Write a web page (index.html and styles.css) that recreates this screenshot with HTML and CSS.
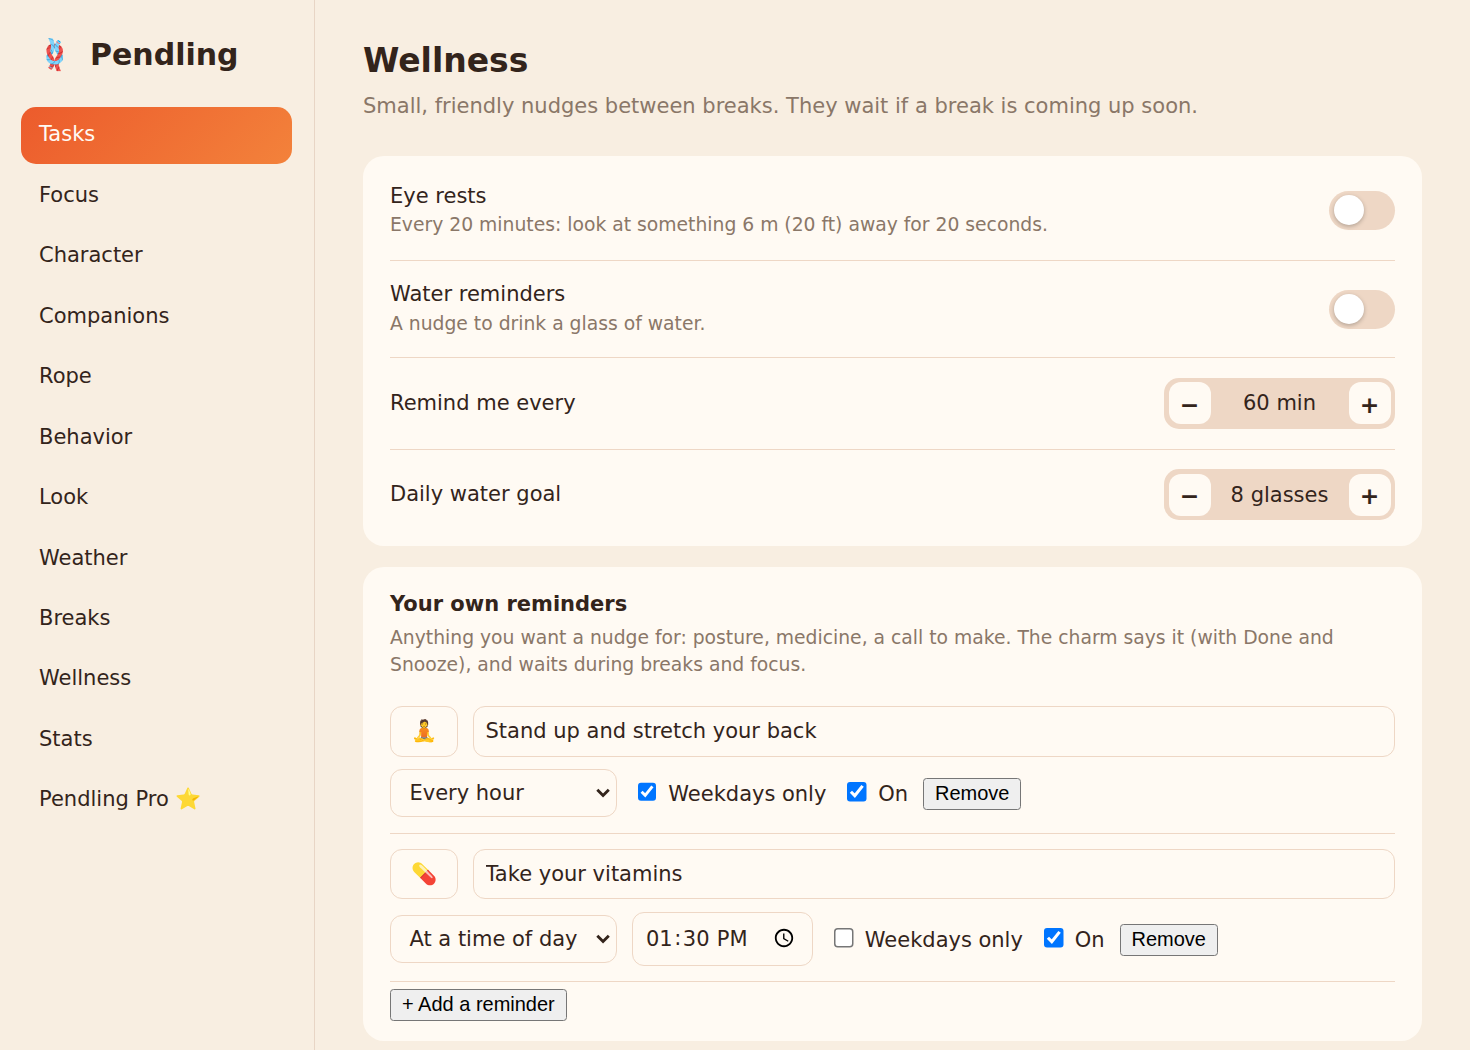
FILE: index.html
```
<!DOCTYPE html>
<html lang="en">
<head>
<meta charset="utf-8">
<title>Pendling</title>
<link rel="stylesheet" href="styles.css">
</head>
<body>
<aside class="sidebar">
  <div class="brand"><span class="brand-icon">🪢</span><span>Pendling</span></div>
  <nav class="nav">
    <a class="active">Tasks</a>
    <a>Focus</a>
    <a>Character</a>
    <a>Companions</a>
    <a>Rope</a>
    <a>Behavior</a>
    <a>Look</a>
    <a>Weather</a>
    <a>Breaks</a>
    <a>Wellness</a>
    <a>Stats</a>
    <a>Pendling Pro ⭐</a>
  </nav>
</aside>
<main class="main">
  <h1>Wellness</h1>
  <p class="lead">Small, friendly nudges between breaks. They wait if a break is coming up soon.</p>

  <section class="card settings">
    <div class="row row-eye">
      <div><div class="label">Eye rests</div><div class="hint">Every 20 minutes: look at something 6 m (20 ft) away for 20 seconds.</div></div>
      <div class="toggle"><span class="knob"></span></div>
    </div>
    <div class="row row-water">
      <div><div class="label">Water reminders</div><div class="hint">A nudge to drink a glass of water.</div></div>
      <div class="toggle"><span class="knob"></span></div>
    </div>
    <div class="row row-every">
      <div class="label">Remind me every</div>
      <div class="stepper"><button>−</button><span>60 min</span><button>+</button></div>
    </div>
    <div class="row row-goal">
      <div class="label">Daily water goal</div>
      <div class="stepper"><button>−</button><span>8 glasses</span><button>+</button></div>
    </div>
  </section>

  <section class="card own">
    <h2>Your own reminders</h2>
    <p class="hint">Anything you want a nudge for: posture, medicine, a call to make. The charm says it (with Done and Snooze), and waits during breaks and focus.</p>
    <div class="reminder first">
      <div class="line"><input class="field emoji" value="🧘"><input class="field text" value="Stand up and stretch your back"></div>
      <div class="line options">
        <div class="picker">
          <select class="field"><option>Every hour</option><option>At a time of day</option></select>
          <svg class="chevron" viewBox="0 0 14 10"><path d="M1.2 1.8 7 7.6l5.8-5.8"/></svg>
        </div>
        <label class="check"><input type="checkbox" checked> Weekdays only</label>
        <label class="check"><input type="checkbox" checked> On</label>
        <button class="plain">Remove</button>
      </div>
    </div>
    <div class="reminder second">
      <div class="line"><input class="field emoji" value="💊"><input class="field text" value="Take your vitamins"></div>
      <div class="line options">
        <div class="picker">
          <select class="field"><option>At a time of day</option><option>Every hour</option></select>
          <svg class="chevron" viewBox="0 0 14 10"><path d="M1.2 1.8 7 7.6l5.8-5.8"/></svg>
        </div>
        <input class="field time" type="time" value="13:30">
        <label class="check"><input type="checkbox"> Weekdays only</label>
        <label class="check"><input type="checkbox" checked> On</label>
        <button class="plain">Remove</button>
      </div>
    </div>
    <button class="plain add">+ Add a reminder</button>
  </section>
</main>
</body>
</html>
```
FILE: styles.css
```
* { box-sizing: border-box; }
html { zoom: 1.5; }
body {
  margin: 0;
  width: 980px;
  height: 700px;
  overflow: hidden;
  display: flex;
  background: #f8eee1;
  color: #33241b;
  font: 14px "DejaVu Sans", sans-serif;
}
.sidebar {
  width: 210px;
  flex: none;
  padding: 20px 14px;
  border-right: 1px solid #e8d5c5;
}
.brand {
  display: flex;
  align-items: center;
  gap: 10px;
  height: 33px;
  padding: 0 12px 0 10px;
  margin-bottom: 18px;
  font-size: 20px;
  font-weight: 700;
}
.brand-icon { width: 26px; }
.nav { display: flex; flex-direction: column; gap: 2px; }
.nav a {
  height: 38.3px;
  line-height: 37.8px;
  padding: 0 12px;
  border-radius: 10px;
}
.nav .active {
  line-height: 36.6px;
  margin-right: .4px;
  color: #fffaf3;
  background: linear-gradient(135deg, #ec5b2c, #f3823b);
}
.main { flex: 1; padding: 26.6px 32px 0; }
h1 { margin: 0; font-size: 22px; line-height: 28px; }
.lead { margin: 6.4px 0 0; line-height: 20px; color: #8a7768; height: 43px; }
.card {
  background: #fffaf3;
  border-radius: 14px;
  margin-bottom: 14px;
}
.settings { height: 260px; padding: 4px 18px; }
.row {
  display: flex;
  align-items: center;
  justify-content: space-between;
  border-bottom: 1px solid #eed7c5;
}
.row-eye { height: 66px; }
.row-eye .label { margin-top: -1px; }
.row-eye .toggle { margin-bottom: 1px; }
.row-water { height: 64.7px; }
.row-every { height: 61.2px; }
.row-goal { height: 60.2px; border-bottom: 0; }
.row-goal .label { margin-bottom: .8px; }
.label { line-height: 18px; }
.hint { font-size: 12.5px; line-height: 18px; color: #8a7768; }
.row .hint { margin-top: .8px; }
.toggle {
  width: 44px;
  height: 26px;
  border-radius: 13px;
  padding: 3px;
  background: #eed7c5;
}
.knob {
  display: block;
  width: 20px;
  height: 20px;
  border-radius: 50%;
  background: #fff;
  box-shadow: 0 1px 3px rgba(0, 0, 0, .25);
}
.stepper {
  display: flex;
  width: 154px;
  height: 34px;
  padding: 3px;
  border-radius: 10px;
  background: #eed7c5;
}
.stepper button {
  width: 28px;
  height: 28px;
  padding: 2px 0 0;
  border: 0;
  border-radius: 8px;
  background: #fffaf3;
  color: #33241b;
  font: 700 15.6px "DejaVu Sans", sans-serif;
}
.stepper span { flex: 1; text-align: center; line-height: 28px; }
.own { height: 316px; padding: 17px 18px 0; }
h2 { margin: 0; font-size: 14px; line-height: 17px; }
.own .hint { margin: 4px 0 0; height: 37px; }
.line { display: flex; gap: 10px; }
.reminder { border-bottom: 1px solid #eed7c5; }
.first { padding-top: 18px; height: 102.7px; }
.second { padding-top: 10.3px; height: 98.9px; }
.field {
  margin: 0;
  border: 1px solid #eed7c5;
  border-radius: 8px;
  padding: 0 8px;
  background: #fffaf3;
  color: #33241b;
  font: 14px "DejaVu Sans", sans-serif;
  height: 33.6px;
}
.emoji, .text { padding-bottom: .8px; }
.emoji { width: 45px; text-align: center; }
.text { flex: 1; }
.options { align-items: center; margin-top: 8.2px; }
.second .options { margin-top: 8.5px; }
.picker { display: grid; align-items: center; }
.picker > * { grid-area: 1 / 1; }
.picker select { appearance: none; width: 151px; height: 32px; padding: 0 12.3px; }
.chevron {
  width: 9.4px;
  height: 6.6px;
  justify-self: end;
  margin-right: 4px;
  pointer-events: none;
  fill: none;
  stroke: #33241b;
  stroke-width: 2.9;
}
.options .time { width: 121px; height: 36px; padding-bottom: 1px; }
.check { white-space: nowrap; word-spacing: -.1px; margin-bottom: 2.4px; }
.check input { width: 13.2px; height: 13.2px; position: relative; top: .4px; }
.plain { font: 13.333px "Liberation Sans", Arial, sans-serif; position: relative; top: .3px; }
.add { display: block; margin-top: 4.2px; }
```
